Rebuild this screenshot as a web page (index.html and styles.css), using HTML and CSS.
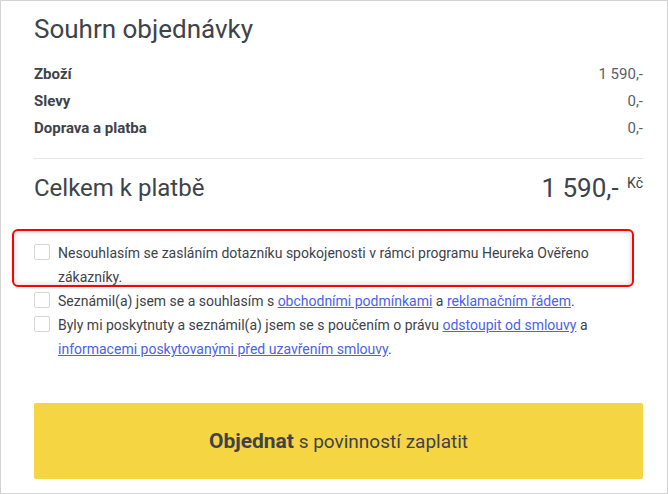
FILE: index.html
```html
<!DOCTYPE html>
<html lang="cs">
<head>
    <meta charset="UTF-8">
    <meta name="viewport" content="width=device-width, initial-scale=1.0">
    <title>Souhrn objednávky</title>
    <link rel="stylesheet" href="styles.css">
</head>
<body>
    <div class="summary">
        <h2>Souhrn objednávky</h2>

        <div class="rows">
            <div class="row"><span class="row-label">Zboží</span><span>1 590,-</span></div>
            <div class="row"><span class="row-label">Slevy</span><span>0,-</span></div>
            <div class="row"><span class="row-label">Doprava a platba</span><span>0,-</span></div>
        </div>

        <div class="total">
            <span>Celkem k platbě</span>
            <span class="total-price">1 590,- <sup>Kč</sup></span>
        </div>

        <div class="agreements">
            <label class="check highlight">
                <input type="checkbox">
                <span>Nesouhlasím se zasláním dotazníku spokojenosti v rámci programu Heureka Ověřeno zákazníky.</span>
            </label>
            <label class="check">
                <input type="checkbox">
                <span>Seznámil(a) jsem se a souhlasím s <a href="#">obchodními podmínkami</a> a <a href="#">reklamačním řádem</a>.</span>
            </label>
            <label class="check">
                <input type="checkbox">
                <span>Byly mi poskytnuty a seznámil(a) jsem se s poučením o právu <a href="#">odstoupit od smlouvy</a> a <a href="#">informacemi poskytovanými před uzavřením smlouvy</a>.</span>
            </label>
        </div>

        <button type="submit" class="order-btn"><strong>Objednat</strong> s povinností zaplatit</button>
    </div>
</body>
</html>
```

FILE: styles.css
```css
body {
    font-family: Roboto, "Liberation Sans", sans-serif;
    margin: 0;
    color: #3e434a;
    background: #ffffff;
}

.summary {
    box-sizing: border-box;
    width: 668px;
    height: 494px;
    border: 1px solid #d3d3d3;
    padding: 13px 24px 0 33px;
}

.summary h2 {
    font-size: 26px;
    font-weight: 400;
    margin: 0 0 17px 0;
    line-height: 30px;
}

.rows {
    border-bottom: 1px solid #e6e6e6;
    padding-bottom: 16px;
}

.row {
    display: flex;
    justify-content: space-between;
    font-size: 15px;
    line-height: 27px;
    color: #5a5f66;
}

.row-label {
    font-weight: 700;
    color: #3e434a;
}

.total {
    display: flex;
    justify-content: space-between;
    align-items: center;
    font-size: 24px;
    padding: 14px 0 26px 0;
}

.total-price {
    font-size: 26px;
}

.total-price sup {
    font-size: 14px;
    vertical-align: 9px;
    margin-left: 2px;
}

.agreements {
    margin-bottom: 42px;
}

.check {
    display: flex;
    align-items: flex-start;
    font-size: 14px;
    line-height: 24px;
    color: #3e434a;
}

.check input {
    appearance: none;
    flex: none;
    width: 16px;
    height: 16px;
    margin: 3px 8px 0 0;
    border: 1px solid #d6d6d6;
    border-radius: 2px;
    background: #fff;
}

.check.highlight {
    margin: 0 9px 2px -22px;
    padding: 10px 0 0 20px;
    border: 2px solid #ff0000;
    border-radius: 6px;
    box-shadow: inset 0 0 6px rgba(0, 0, 0, 0.18);
}

.check.highlight span {
    margin-bottom: -4px;
}

.check a {
    color: #4a63e8;
}

.order-btn {
    display: block;
    width: 100%;
    height: 76px;
    border: none;
    border-radius: 2px;
    background: #f5d541;
    color: #3e434a;
    font-family: inherit;
    font-size: 19px;
}

.order-btn strong {
    font-size: 21px;
}
```
